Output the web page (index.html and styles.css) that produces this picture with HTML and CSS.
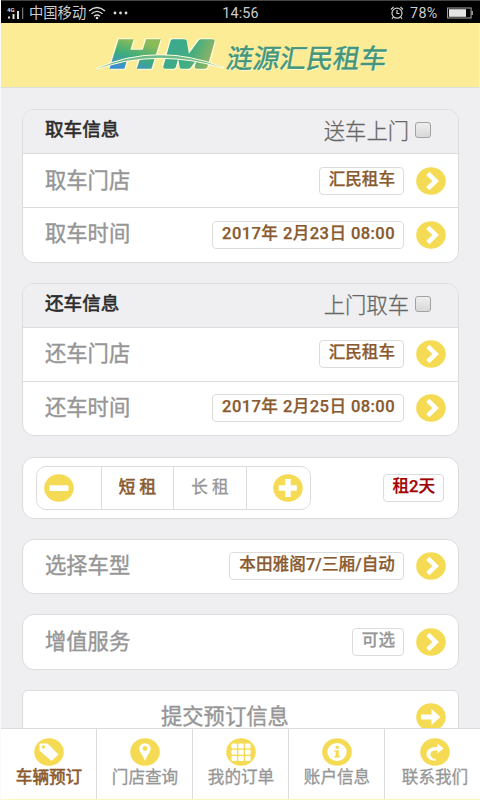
FILE: index.html
```
<!DOCTYPE html>
<html lang="zh-CN">
<head>
<meta charset="utf-8">
<title>涟源汇民租车</title>
<link rel="stylesheet" href="styles.css">
</head>
<body>
<svg class="defs" width="0" height="0" aria-hidden="true">
  <defs>
    <symbol id="disc" viewBox="0 0 30 28"><ellipse cx="15" cy="14" rx="14.8" ry="13.8" fill="#f5db54"/></symbol>
    <symbol id="next" viewBox="0 0 30 28"><use href="#disc"/><path d="M11.800 6.300 19.700 14l-7.900 7.700" fill="none" stroke="#fff" stroke-width="4.600"/></symbol>
    <symbol id="go" viewBox="0 0 30 28"><use href="#disc"/><path d="M5 11.500h10.500V6l9 8-9 8v-5.500H5z" fill="#fff"/></symbol>
    <symbol id="minus" viewBox="0 0 30 28"><use href="#disc"/><rect x="5.500" y="11.300" width="19" height="5.600" rx=".6" fill="#fff"/></symbol>
    <symbol id="plus" viewBox="0 0 30 28"><use href="#disc"/><path d="M12.200 5h5.600v6.300h6v5.400h-6V23h-5.600v-6.300h-6.500v-5.400h6.500z" fill="#fff"/></symbol>
  </defs>
</svg>
<div class="screen">
  <div class="status">
    <svg class="signal" width="20" height="14" viewBox="0 0 20 14"><g fill="#ddd"><rect x="1" y="10.500" width="2" height="2"/><rect x="5.500" y="8" width="2" height="5"/><rect x="10" y="5" width="2" height="8"/><rect x="15" y="1.500" width="1.300" height="11.500" opacity=".5"/></g><text x="0" y="5.800" class="net">4G</text></svg>
    <span class="carrier">中国移动</span>
    <svg class="wifi" width="18" height="14" viewBox="0 0 18 14"><g fill="none" stroke="#ddd" stroke-width="1.300"><path d="M1 5Q9-2 17 5M3.500 7.700Q9 3 14.500 7.700M6 10.200Q9 7.800 12 10.200"/></g><circle cx="9" cy="12" r="1.300" fill="#ddd"/></svg>
    <svg class="dots" width="16" height="4" viewBox="0 0 16 4"><g fill="#ddd"><circle cx="2" cy="2" r="1.400"/><circle cx="7.500" cy="2" r="1.400"/><circle cx="13" cy="2" r="1.400"/></g></svg>
    <span class="clock">14:56</span>
    <div class="power">
      <svg width="14" height="14" viewBox="0 0 14 14"><g fill="none" stroke="#ccc" stroke-width="1.200"><circle cx="7" cy="7.200" r="5"/><path d="M7 4v3.500h2.500M1 3.500 3.500 1M13 3.500 10.500 1M3.300 11 2 12.800M10.700 11l1.300 1.800"/></g></svg>
      <span class="percent">78%</span>
      <svg width="26" height="12" viewBox="0 0 26 12"><rect x=".6" y="1" width="23.500" height="10" fill="none" stroke="#aaa"/><rect x="2" y="2.200" width="17" height="7.600" fill="#e4e4e4"/><path d="M25.200 4v4" stroke="#bbb" stroke-width="1.200"/></svg>
    </div>
  </div>
  <header class="brand">
    <svg class="mark" width="132" height="50" viewBox="0 0 132 50">
      <defs>
        <linearGradient id="h" gradientUnits="userSpaceOnUse" x1="36" y1="4" x2="28" y2="33"><stop offset="0" stop-color="#8abb58"/><stop offset=".5" stop-color="#3dac7c"/><stop offset="1" stop-color="#3f8fd0"/></linearGradient>
        <linearGradient id="m" gradientUnits="userSpaceOnUse" x1="66" y1="8" x2="118" y2="30"><stop offset="0" stop-color="#38a790"/><stop offset=".55" stop-color="#42ae82"/><stop offset="1" stop-color="#a9b558"/></linearGradient>
      </defs>
      <g class="letters">
        <text x="16" y="31" textLength="44" lengthAdjust="spacingAndGlyphs" fill="url(#h)" stroke="url(#h)">H</text>
        <text x="69" y="31" textLength="46" lengthAdjust="spacingAndGlyphs" fill="url(#m)" stroke="url(#m)" stroke-linejoin="round">M</text>
      </g>
      <path d="M0 33Q62 6 128 32Q62 11 0 33Z" fill="#6dbb8a" stroke="#fffbe0" stroke-width="1.800" paint-order="stroke"/>
    </svg>
    <span class="brand-name">涟源汇民租车</span>
  </header>
  <main class="content">
    <section class="card">
      <div class="card-head"><h2>取车信息</h2><label>送车上门<input type="checkbox"></label></div>
      <div class="row"><span class="label">取车门店</span><span class="chip">汇民租车</span><svg class="ico"><use href="#next"/></svg></div>
      <div class="row low"><span class="label">取车时间</span><span class="chip date">2017年 2月23日 08:00</span><svg class="ico"><use href="#next"/></svg></div>
    </section>
    <section class="card">
      <div class="card-head"><h2>还车信息</h2><label>上门取车<input type="checkbox"></label></div>
      <div class="row up"><span class="label">还车门店</span><span class="chip">汇民租车</span><svg class="ico"><use href="#next"/></svg></div>
      <div class="row up"><span class="label">还车时间</span><span class="chip date">2017年 2月25日 08:00</span><svg class="ico"><use href="#next"/></svg></div>
    </section>
    <section class="card term">
      <div class="stepper">
        <div class="step"><svg class="ico"><use href="#minus"/></svg></div>
        <div class="step on">短 租</div>
        <div class="step">长 租</div>
        <div class="step last"><svg class="ico"><use href="#plus"/></svg></div>
      </div>
      <span class="chip days">租2天</span>
    </section>
    <section class="card"><div class="row single"><span class="label">选择车型</span><span class="chip car">本田雅阁7/三厢/自动</span><svg class="ico"><use href="#next"/></svg></div></section>
    <section class="card"><div class="row single tall"><span class="label">增值服务</span><span class="chip muted">可选</span><svg class="ico"><use href="#next"/></svg></div></section>
    <section class="card submit"><div class="row single"><span class="label">提交预订信息</span><svg class="ico"><use href="#go"/></svg></div></section>
  </main>
  <nav class="tabs">
    <a class="tab on"><svg class="ico" viewBox="0 0 30 28"><use href="#disc"/><path d="M6 6h7.500L24 16.500 17.500 22.500 6 12.500z" fill="#fff" stroke="#fff" stroke-width="1" stroke-linejoin="round"/><circle cx="9.500" cy="9" r="1.700" fill="#f5db54"/></svg>车辆预订</a>
    <a class="tab"><svg class="ico" viewBox="0 0 30 28"><use href="#disc"/><path d="M15 23C13.500 18 9.300 14 9.300 10.500a5.700 5.300 0 0 1 11.400 0C20.700 14 16.500 18 15 23z" fill="#fff"/><circle cx="15" cy="10.500" r="2.400" fill="#f5db54"/></svg>门店查询</a>
    <a class="tab"><svg class="ico" viewBox="0 0 30 28"><use href="#disc"/><g fill="#fff"><rect x="5.500" y="5.500" width="5.500" height="5" rx="1"/><rect x="12.300" y="5.500" width="5.500" height="5" rx="1"/><rect x="19.100" y="5.500" width="5.500" height="5" rx="1"/><rect x="5.500" y="11.700" width="5.500" height="5" rx="1"/><rect x="12.300" y="11.700" width="5.500" height="5" rx="1"/><rect x="19.100" y="11.700" width="5.500" height="5" rx="1"/><rect x="5.500" y="17.900" width="5.500" height="5" rx="1"/><rect x="12.300" y="17.900" width="5.500" height="5" rx="1"/><rect x="19.100" y="17.900" width="5.500" height="5" rx="1"/></g></svg>我的订单</a>
    <a class="tab"><svg class="ico" viewBox="0 0 30 28"><use href="#disc"/><ellipse cx="15" cy="14" rx="9.700" ry="9" fill="#fff"/><path d="M13.500 8h3.300v2.700h-3.300zM12.300 12.200h4.500v5.700h1.300v1.600h-5.800v-1.600h1.300v-4.100h-1.300z" fill="#f5db54"/></svg>账户信息</a>
    <a class="tab"><svg class="ico" viewBox="0 0 30 28"><use href="#disc"/><path d="M17.500 5.500l6 5-6 5v-3.200C11.500 12 9 15.500 11 18.500c1 1.700 3 2.500 5 2.700v1.300C10.500 23 6.500 20 6.500 16.200 6.500 11.500 11 8.700 17.500 8.700z" fill="#fff"/></svg>联系我们</a>
  </nav>
</div>
</body>
</html>
```
FILE: styles.css
```
* { box-sizing: border-box; }
body {
  margin: 0;
  background: #efeff1;
  font-family: Roboto, "Noto Sans CJK SC", sans-serif;
}
.defs { position: absolute; }
.screen {
  display: flex;
  flex-direction: column;
  height: 800px;
  overflow: hidden;
  border-left: 1px solid #fafafa;
}
.status {
  display: flex;
  align-items: center;
  flex: 0 0 23px;
  margin-left: -1px;
  padding: 2px 7px 0 7px;
  background: #000;
  border-top: 1px solid #444;
  color: #ccc;
  font-size: 14.3px;
  line-height: 20px;
}
.signal { margin-right: 2px; }
.net { font: bold 6px Roboto, sans-serif; fill: #ddd; }
.wifi { margin: 0 7px 0 2px; }
.clock { width: 38px; margin-left: 93px; letter-spacing: .2px; }
.power { display: flex; align-items: center; gap: 6px; margin-left: auto; }
.percent { width: 31px; letter-spacing: .4px; }
.brand {
  display: flex;
  flex: 0 0 65px;
  padding: 13px 0 0 95px;
  margin-right: 1px;
  background: #fdec96;
  border-bottom: 1px solid #dedede;
}
.mark { overflow: visible; }
.letters {
  font: italic bold 36px "Liberation Sans", sans-serif;
  stroke-width: 3.600px;
  filter: drop-shadow(1px 1px 0 #fffbe0) drop-shadow(-1px -1px 0 #fffbe0);
}
.brand-name {
  margin: 3px 0 0 -2px;
  color: #43967a;
  font-size: 26.700px;
  font-weight: 400;
  line-height: 40px;
  transform: skewX(-10deg);
  -webkit-text-stroke: .5px;
  text-shadow: 1px 1px 0 #fffbe0;
}
.content {
  display: flex;
  flex: 1 1 0;
  flex-direction: column;
  gap: 20px;
  min-height: 0;
  padding: 21px 21px 0;
  overflow: hidden;
}
.card {
  flex: none;
  background: #fff;
  border: 1px solid #dcdcdc;
  border-radius: 12px;
  overflow: hidden;
}
.card-head {
  display: flex;
  align-items: center;
  justify-content: space-between;
  height: 43px;
  padding: 0 27px 0 22px;
  background: #efeff1;
}
.card-head h2 {
  margin: 0 0 8px;
  color: #2c2c2c;
  font-size: 18.600px;
  font-weight: 400;
  -webkit-text-stroke: .6px;
}
.card-head label {
  display: flex;
  align-items: center;
  margin-bottom: 4px;
  color: #666;
  font-size: 21.300px;
  font-weight: 300;
  -webkit-text-stroke: .3px;
}
.card-head input {
  appearance: none;
  width: 16px;
  height: 16px;
  margin: 1px 0 0 6px;
  border: 1px solid #a2a2a2;
  border-radius: 3px;
  background: linear-gradient(#eee, #d8d8d8);
}
.row {
  display: flex;
  align-items: center;
  height: 54px;
  padding: 0 12px 0 22px;
  border-top: 1px solid #dcdcdc;
}
.row.low { height: 55px; }
.row.up { padding-bottom: 1px; }
.row.single { height: 53px; padding-bottom: 1px; border-top: 0; }
.row.tall { height: 54px; }
.label {
  margin: 0 auto 0 0;
  color: #969696;
  font-size: 21.300px;
  font-weight: 400;
  line-height: 30px;
  -webkit-text-stroke: .4px;
}
.low .label { margin-bottom: 2px; }
.chip {
  height: 28px;
  padding: 0 8px 0 9px;
  border: 1px solid #dcdcdc;
  border-radius: 4px;
  color: #8a5a2e;
  font-size: 16.600px;
  font-weight: 500;
  line-height: 23px;
  white-space: nowrap;
  -webkit-text-stroke: .25px;
}
.chip.date { letter-spacing: .4px; }
.chip.car { letter-spacing: .05px; }
.chip.muted { color: #969696; }
.chip.days { padding-left: 8px; color: #a00000; }
.ico { flex: none; width: 30px; height: 28px; margin-left: 12px; }
.term {
  display: flex;
  align-items: center;
  justify-content: space-between;
  height: 62px;
  margin-top: 1px;
  padding: 0 14px 0 13px;
}
.stepper {
  display: grid;
  grid-template-columns: 64px 72px 73px 64px;
  height: 44px;
  border: 1px solid #dcdcdc;
  border-radius: 10px;
}
.step {
  display: flex;
  align-items: center;
  justify-content: center;
  padding-bottom: 4px;
  color: #969696;
  font-size: 16.600px;
  font-weight: 400;
  -webkit-text-stroke: .3px;
  border-left: 1px solid #dcdcdc;
}
.step:first-child { justify-content: flex-start; padding: 0 0 0 7px; border: 0; }
.step.last { justify-content: flex-end; padding: 0 7px 0 0; }
.step .ico { margin: 0; }
.step.on, .tab.on { color: #8a5a2e; -webkit-text-stroke: .6px; }
.submit { border-radius: 6px; }
.submit .label { margin-left: 116px; }
.tabs {
  display: grid;
  grid-template-columns: repeat(5, 96px);
  flex: 0 0 72px;
  background: #fff;
  border-top: 1px solid #dcdcdc;
  border-bottom: 1px solid #fafac0;
}
.tab {
  display: flex;
  flex-direction: column;
  align-items: center;
  padding: 9px 0 0 1px;
  border-right: 1px solid #dcdcdc;
  color: #969696;
  font-size: 16.600px;
  line-height: 24px;
  -webkit-text-stroke: .3px;
}
.tab:last-child { padding-left: 4px; border: 0; }
.tab .ico { margin: 0; }
```
